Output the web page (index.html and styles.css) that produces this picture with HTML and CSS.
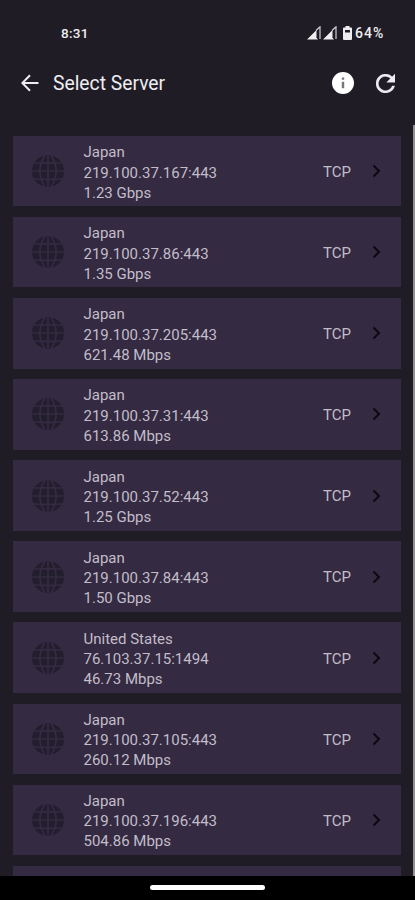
FILE: index.html
```html
<!DOCTYPE html>
<html lang="en">
<head>
<meta charset="utf-8">
<title>Select Server</title>
<link rel="stylesheet" href="styles.css">
</head>
<body>
<svg class="defs" aria-hidden="true">
  <symbol id="globe" viewBox="0 0 32 32">
    <circle class="globe-fill" cx="16" cy="16" r="16"/>
    <path class="globe-line" d="M16 0V32M0 16H32M2 8Q16 7.4 30 8M2 24Q16 24.6 30 24M13 0Q2.800 16 13 32M19 0Q29.200 16 19 32"/>
  </symbol>
  <symbol id="chevron" viewBox="0 0 10 14"><path d="M2.500 1.500L8 7L2.500 12.500"/></symbol>
  <symbol id="signal" viewBox="0 0 15 14"><path class="signal-fill" d="M0 13.500L9.500 4V11H9L11 13.500Z"/><path class="signal-line" d="M9 4.500L13 .8V13"/></symbol>
</svg>
<div class="screen">
  <header>
    <div class="status">
      <span class="time">8:31</span>
      <svg class="signal"><use href="#signal"/></svg>
      <svg class="signal"><use href="#signal"/></svg>
      <svg class="battery" viewBox="0 0 9 14"><path fill-rule="evenodd" d="M2.500 0H6.500V1.500H8Q9 1.500 9 2.500V13Q9 14 8 14H1Q0 14 0 13V2.500Q0 1.500 1 1.500H2.500ZM2 4V6.500H7V4Z"/></svg>
      <span class="percent">64%</span>
    </div>
    <div class="toolbar">
      <svg class="back" viewBox="0 0 18 18"><path d="M17.500 9H1.500M9 1.300L1.300 9L9 16.700"/></svg>
      <h1>Select Server</h1>
      <svg class="info" viewBox="0 0 22 22"><circle cx="11" cy="11" r="11"/><path d="M11 5.500V7.700M11 9.800V16.300"/></svg>
      <svg class="refresh" viewBox="4 4 16 16"><path d="M17.650 6.350A8 8 0 1 0 19.730 14h-2.080A6 6 0 1 1 12 6c1.660 0 3.140.69 4.220 1.780L13 11h7V4z"/></svg>
    </div>
  </header>
  <main>
    <ul class="list" id="list"></ul>
    <div class="scrollbar"></div>
  </main>
  <footer><div class="pill"></div></footer>
</div>
<script src="script.js"></script>
</body>
</html>
```
FILE: styles.css
```css
* { box-sizing: border-box; }
body { margin: 0; background: #1f1c26; font-family: Roboto, "Liberation Sans", sans-serif; }
.defs { position: absolute; width: 0; height: 0; }
.screen { height: 900px; display: flex; flex-direction: column; overflow: hidden; color: #eeedf0; }
header { height: 125px; flex: none; }
.status { height: 65px; padding: 0 29px 0 61px; display: flex; align-items: center; font-size: 14px; font-weight: 500; }
.time { flex: 1; font-size: 13.500px; letter-spacing: .3px; }
.percent { letter-spacing: 1px; width: 31px; white-space: nowrap; }
.signal { width: 15px; height: 14px; margin-right: 1px; }
.signal-fill { fill: #eeedf0; }
.signal-line { fill: none; stroke: #d0ced3; stroke-width: 1.2; }
.battery { width: 9px; height: 14px; margin: 0 3px 0 4px; fill: #eeedf0; }
.toolbar { height: 36px; padding: 0 20px 0 21px; display: flex; align-items: center; }
.back { width: 18px; height: 18px; fill: none; stroke: #eeedf0; stroke-width: 2; }
h1 { flex: 1; margin: 1px 0 0 14px; font-size: 19.300px; font-weight: 400; line-height: 24px; }
.info { width: 22px; height: 22px; fill: #fff; }
.info path { stroke: #77747c; stroke-width: 2.4; }
.refresh { width: 19px; height: 19px; margin-left: 22px; fill: #eeedf0; stroke: #eeedf0; stroke-width: .3; }
main { flex: 1; min-height: 0; display: flex; justify-content: space-between; overflow: hidden; }
.list { list-style: none; margin: 0; padding: 11px 0 0 13px; width: 401px; display: flex; flex-direction: column; gap: 10.700px; }
.card { flex: none; height: 70.400px; background: #342a42; padding: 0 20px 0 19px; display: flex; align-items: center; color: #c2bdc9; font-size: 15px; line-height: 20.300px; }
.globe { width: 32px; height: 32px; margin-right: 19.500px; }
.globe-fill { fill: #231e2e; }
.globe-line { fill: none; stroke: #342a42; stroke-width: 1.7; }
.details { flex: 1; padding-top: 3px; }
.details div { white-space: nowrap; }
.protocol { width: 48px; padding-top: 2px; }
.chevron { width: 10px; height: 14px; fill: none; stroke: #0c0910; stroke-width: 2; }
.scrollbar { width: 2px; background: #929094; }
footer { height: 24px; flex: none; background: #000; display: flex; justify-content: center; padding-top: 9px; }
.pill { width: 115px; height: 5px; border-radius: 3px; background: #fff; }
```
FILE: script.js
```js
const servers = [
  ["Japan", "219.100.37.167:443", "1.23 Gbps"],
  ["Japan", "219.100.37.86:443", "1.35 Gbps"],
  ["Japan", "219.100.37.205:443", "621.48 Mbps"],
  ["Japan", "219.100.37.31:443", "613.86 Mbps"],
  ["Japan", "219.100.37.52:443", "1.25 Gbps"],
  ["Japan", "219.100.37.84:443", "1.50 Gbps"],
  ["United States", "76.103.37.15:1494", "46.73 Mbps"],
  ["Japan", "219.100.37.105:443", "260.12 Mbps"],
  ["Japan", "219.100.37.196:443", "504.86 Mbps"]
];
const cards = servers.map(([country, address, speed]) => `
  <li class="card">
    <svg class="globe"><use href="#globe"/></svg>
    <div class="details"><div>${country}</div><div>${address}</div><div>${speed}</div></div>
    <span class="protocol">TCP</span>
    <svg class="chevron"><use href="#chevron"/></svg>
  </li>`);
document.getElementById("list").innerHTML = cards.join("") + '<li class="card"></li>';
```
